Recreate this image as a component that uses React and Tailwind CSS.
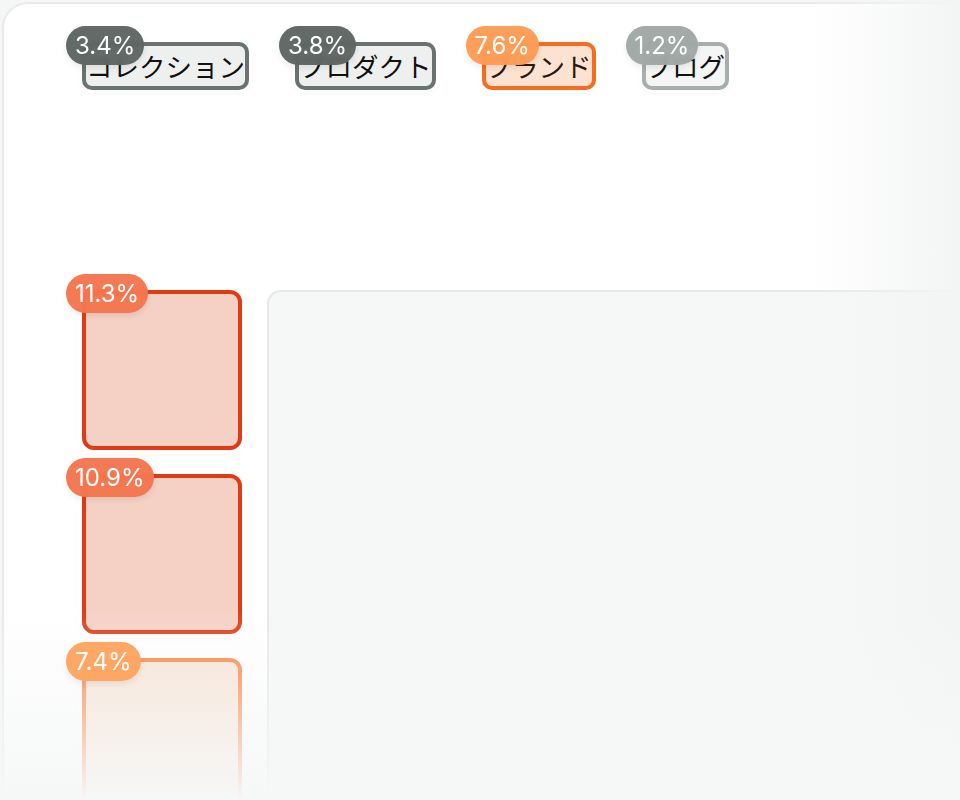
import React from 'react';

const TONES = {
  dark:   { box: 'border-[#6b7370] bg-[#eef0ef] text-[#111]', badge: 'bg-[#5b625f]/95' },
  light:  { box: 'border-[#a8aeab] bg-[#f4f6f5] text-[#111]', badge: 'bg-[#9fa5a2]/95' },
  orange: { box: 'border-[#f86c1f] bg-[#fde2d1] text-[#2a1a0e]', badge: 'bg-[#fd9a52]/95' },
  red:    { box: 'border-[#e13b15] bg-[#f5d0c5]', badge: 'bg-[#f3734c]/95' },
  amber:  { box: 'border-[#fc7b36] bg-[#f8e3d4]', badge: 'bg-[#fea35e]/95' },
};

const NAV = [
  { label: 'コレクション', pct: '3.4%', tone: 'dark' },
  { label: 'プロダクト',   pct: '3.8%', tone: 'dark' },
  { label: 'ブランド',     pct: '7.6%', tone: 'orange' },
  { label: 'ブログ',       pct: '1.2%', tone: 'light' },
];

const TILES = [
  { pct: '11.3%', tone: 'red' },
  { pct: '10.9%', tone: 'red' },
  { pct: '7.4%',  tone: 'amber' },
];

function Badge({ pct, tone }) {
  return (
    <span
      className={`absolute -left-[16px] -top-[16px] z-10 h-[39px] px-[9px] rounded-full flex items-center text-white text-[24px] leading-none backdrop-blur-[2px] shadow-[0_3px_6px_rgba(0,0,0,0.08)] ${TONES[tone].badge}`}
      style={{ fontFamily: 'Inter, "Noto Sans", sans-serif' }}
    >
      {pct}
    </span>
  );
}

export default function App() {
  return (
    <div className="relative w-[960px] h-[800px] overflow-hidden bg-[#f5f6f6] pt-[2px] pl-[2px]">
      {/* page card */}
      <div className="h-[1000px] w-[1100px] rounded-tl-[26px] border-t-2 border-l-2 border-[#e9eaea] bg-white pl-[78px] pt-[38px]">

        {/* nav with click share */}
        <nav className="flex gap-[46px]">
          {NAV.map(({ label, pct, tone }) => (
            <div key={label} className="relative">
              <Badge pct={pct} tone={tone} />
              <div
                className={`border-4 rounded-[10px] text-[26.5px] leading-[40px] whitespace-nowrap shadow-[0_0_0_3px_#fff,0_2px_6px_rgba(0,0,0,0.07)] ${TONES[tone].box}`}
                style={{ fontFamily: '"Noto Sans CJK JP", "Noto Sans", sans-serif' }}
              >
                {label}
              </div>
            </div>
          ))}
        </nav>

        {/* body */}
        <div className="flex mt-[200px]">
          <div className="flex flex-col gap-[24px]">
            {TILES.map(({ pct, tone }, i) => (
              <div key={i} className="relative">
                <Badge pct={pct} tone={tone} />
                <div className={`w-[160px] h-[160px] border-4 rounded-[12px] shadow-[0_0_0_4px_#fff,0_2px_8px_rgba(0,0,0,0.07)] ${TONES[tone].box}`} />
              </div>
            ))}
          </div>
          <div className="ml-[25px] flex-1 h-[700px] rounded-tl-[14px] border-t-2 border-l-2 border-[#e6e8e7] bg-[#f6f8f7]" />
        </div>
      </div>

      {/* edge fades */}
      <div className="pointer-events-none absolute right-0 top-0 h-full w-[150px] bg-gradient-to-r from-[#f5f6f6]/0 to-[#f3f4f4]" />
      <div className="pointer-events-none absolute left-0 bottom-0 w-full h-[190px] bg-gradient-to-b from-[#f6f7f7]/0 to-[#f6f7f7]" />
    </div>
  );
}
